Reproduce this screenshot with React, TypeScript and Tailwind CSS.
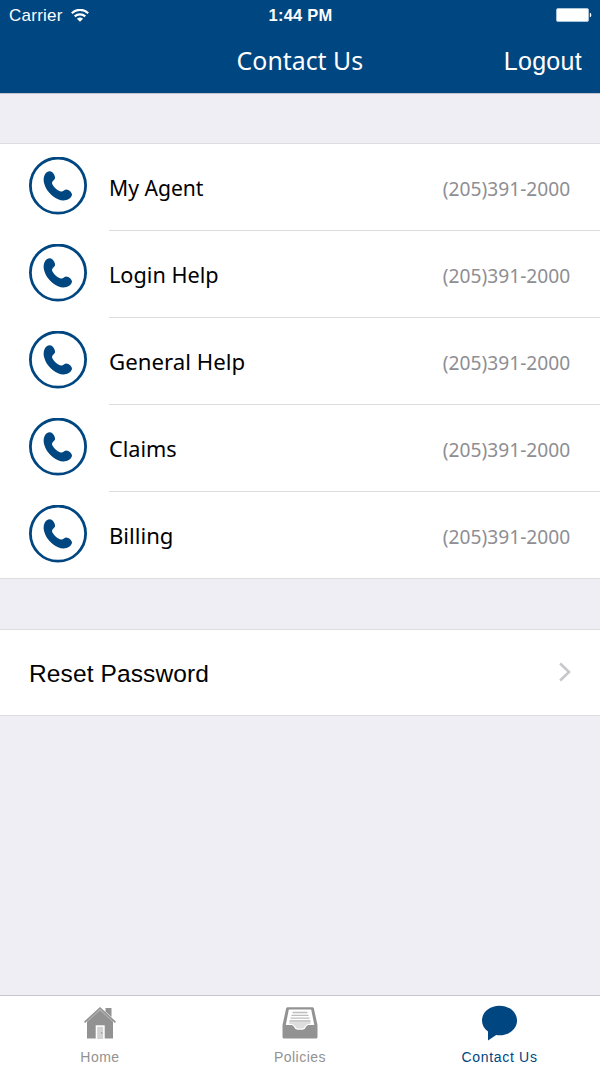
import React from "react";

const PHONE = "(205)391-2000";

const contacts = [
  { name: "My Agent", fit: "scale-x-[0.96]" },
  { name: "Login Help", fit: "scale-x-[0.985]" },
  { name: "General Help", fit: "scale-x-[1.01]" },
  { name: "Claims", fit: "scale-x-[0.985]" },
  { name: "Billing", fit: "scale-x-[1.005]" },
];

function WifiIcon() {
  return (
    <svg className="h-[14px] w-[18px]" viewBox="0 0 18 14" fill="none" stroke="#fff" strokeWidth="2.2">
      <path d="M0.8 4.2C5.3 -0.3 12.7 -0.3 17.2 4.2" />
      <path d="M3.7 7.4C6.7 4.6 11.3 4.6 14.3 7.4" />
      <path d="M9 12.7L5.9 9.8C7.6 8.1 10.4 8.1 12.1 9.8Z" fill="#fff" stroke="none" />
    </svg>
  );
}

function BatteryIcon() {
  return (
    <svg className="mb-[2px] h-[14px] w-[36px]" viewBox="0 0 36 14">
      <rect x="0.5" y="0.5" width="32" height="13" rx="1.5" fill="#fff" stroke="#a9c3d8" />
      <path d="M33.8 4.8C35.8 5.3 35.8 8.9 33.8 9.4Z" fill="#fff" />
    </svg>
  );
}

function PhoneIcon() {
  return (
    <svg className="h-[58px] w-[58px] shrink-0" viewBox="0 0 58 58">
      <circle cx="29" cy="28.6" r="27.6" fill="none" stroke="#004680" strokeWidth="2.8" />
      <path
        fill="#004680"
        d="M17.8 15.2C19.4 14.1 21.7 13.8 23 15C24.8 16.5 26 18.8 26.1 20.8C26 22.3 24.9 22.9 23.9 23.9C22.8 25.1 22.8 26.3 23.6 27.8C25.5 30.9 28 33.1 31 34.3C32.6 34.9 33.7 34.6 34.9 33.5C36.3 32.3 37.7 32.3 39.2 33.1C41 34.1 42.5 35.5 43 37.2C43.1 39.1 41.6 40.7 40.1 41.7C37 43.9 32.9 43.9 29 42.2C22.5 39.3 17 33.3 15.2 26.5C14.2 22.2 14.5 17.9 17.8 15.2Z"
      />
    </svg>
  );
}

function HomeIcon() {
  return (
    <svg className="h-[34px] w-[34px]" viewBox="0 0 34 34">
      <path fill="#929292" d="M22.5 2h6v9l-6-5.5z" />
      <path fill="#929292" d="M17 3L4 14.5V32.5h26V14.5z" />
      <path d="M1.5 16.3L17 2L32.5 16.3" fill="none" stroke="#929292" strokeWidth="1.6" />
      <path d="M3.5 16.1L17 3.9L30.5 16.1" fill="none" stroke="#c8c8c8" strokeWidth="0.7" />
      <path fill="#fff" d="M12.7 19.3h9V33h-9z" />
      <path fill="#d2d2d2" d="M14.2 20.8h6V33h-6z" />
      <circle cx="18.8" cy="27" r="0.7" fill="#888" />
    </svg>
  );
}

function PoliciesIcon() {
  return (
    <svg className="h-[34px] w-[36px]" viewBox="0 0 36 34">
      <path fill="#929292" d="M5.5 1.2h25q1 0 1.3 1L35.5 19v12q0 1.5-1.5 1.5H2q-1.5 0-1.5-1.5V19L4.2 2.2q.3-1 1.300-1z" />
      <path fill="#fff" d="M6.8 3.5h22.400L32.3 19H26.5Q24.5 19.3 23.8 21.3Q23 23.7 20.5 23.7H15.5Q13 23.7 12.2 21.3Q11.5 19.3 9.5 19H3.8z" />
      <path fill="#dedede" d="M7.8 14.5h20.6v3.5H26Q23.7 18.5 22.7 20.8Q22 22.5 20 22.5H16Q14 22.5 13.3 20.8Q12.3 18.5 10 18H7z" />
      <path fill="none" stroke="#bdbdbd" strokeWidth="1.3" d="M10.5 6.5h15M9.5 9.3h17M8.5 12.1h19M7.5 14.9h21" />
    </svg>
  );
}

function ChatIcon() {
  return (
    <svg className="h-[36px] w-[36px]" viewBox="0 0 36 36">
      <path
        fill="#004680"
        d="M17.5 0.7C7.7 0.7 0 7 0 15.5C0 20 2.3 23.9 6 26.6V35.5L14.2 30C15.3 30.2 16.4 30.3 17.5 30.3C27.3 30.3 35 24 35 15.5C35 7 27.3 0.7 17.5 0.7Z"
      />
    </svg>
  );
}

const tabs = [
  { label: "Home", icon: <HomeIcon />, color: "text-[#929292]", fit: "tracking-[0.5px]" },
  { label: "Policies", icon: <PoliciesIcon />, color: "text-[#929292]", fit: "tracking-[0.5px]" },
  { label: "Contact Us", icon: <ChatIcon />, color: "text-[#004680]", fit: "tracking-[0.7px] pr-[1px]" },
];

export default function App() {
  return (
    <div className="flex h-[1067px] w-[600px] flex-col overflow-hidden bg-[#efeef4] font-['Liberation_Sans',sans-serif]">
      <header className="flex h-[94px] shrink-0 flex-col border-b border-[#c5c5d2] bg-[#004680] text-white">
        <div className="grid h-[31px] grid-cols-3 items-center pr-[8px] pl-[9px] text-[17px]">
          <div className="flex items-center gap-[8px]">
            <span className="tracking-[0.25px]">Carrier</span>
            <WifiIcon />
          </div>
          <span className="text-center text-[16.5px] font-bold tracking-[0.2px]">1:44 PM</span>
          <div className="flex justify-end">
            <BatteryIcon />
          </div>
        </div>
        <div className="grid h-[62px] grid-cols-[1fr_auto_1fr] items-center px-[18px]">
          <span />
          <h1 className="scale-x-[0.975] pb-[4px] font-['Noto_Sans',sans-serif] text-[25.5px] leading-[58px]">Contact Us</h1>
          <span className="text-right text-[25px] tracking-[0.3px]">Logout</span>
        </div>
      </header>

      <main className="flex flex-1 flex-col">
        <ul className="mt-[49px] border-y border-[#dddde0] bg-white">
          {contacts.map((c) => (
            <li key={c.name} className="group flex h-[87px] pl-[29px] last:h-[86px]">
              <div className="pt-[13px]">
                <PhoneIcon />
              </div>
              <div className="ml-[22px] flex flex-1 items-center justify-between border-b border-[#dddde0] pr-[30px] font-['Noto_Sans',sans-serif] group-last:border-b-0 group-last:pt-px">
                <span className={"origin-left text-[22px] text-black " + c.fit}>{c.name}</span>
                <span className="origin-right scale-x-[0.935] pt-[2px] text-[20.5px] text-[#8e8e93]">{PHONE}</span>
              </div>
            </li>
          ))}
        </ul>
        <button className="mt-[50px] flex h-[87px] items-center justify-between border-y border-[#dddde0] bg-white px-[29px] text-left">
          <span className="pt-[3px] text-[24.5px] tracking-[0.12px] text-black">Reset Password</span>
          <svg className="mb-[2px] h-[20px] w-[12px]" viewBox="0 0 12 20">
            <path d="M1.2 1.5L10 10L1.2 18.5" fill="none" stroke="#c7c7cc" strokeWidth="2.6" />
          </svg>
        </button>
      </main>

      <nav className="grid h-[72px] shrink-0 grid-cols-3 border-t border-[#c5c5d2] bg-white">
        {tabs.map((t) => (
          <div key={t.label} className={"flex flex-col items-center pt-[9px] " + t.color}>
            <div className="flex h-[36px] items-center justify-center">{t.icon}</div>
            <span className={"mt-[7px] text-[14px] leading-[18px] " + t.fit}>{t.label}</span>
          </div>
        ))}
      </nav>
    </div>
  );
}
